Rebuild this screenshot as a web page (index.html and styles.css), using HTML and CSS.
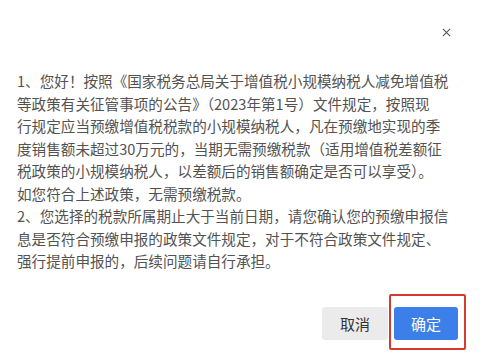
FILE: index.html
```html
<!DOCTYPE html>
<html lang="zh-CN">
<head>
<meta charset="utf-8">
<link rel="stylesheet" href="styles.css">
</head>
<body>
<div class="dialog">
  <div class="header">
    <span class="close" aria-label="关闭">
      <svg viewBox="0 0 10 10" width="9" height="9"><path d="M1 1L9 9M9 1L1 9" stroke="#555" stroke-width="1.2" fill="none"/></svg>
    </span>
  </div>
  <p class="message">1、您好！按照《国家税务总局关于增值税小规模纳税人减免增值税<br>等政策有关征管事项的公告》（2023年第1号）文件规定，按照现<br>行规定应当预缴增值税税款的小规模纳税人，凡在预缴地实现的季<br>度销售额未超过30万元的，当期无需预缴税款（适用增值税差额征<br>税政策的小规模纳税人，以差额后的销售额确定是否可以享受）。<br>如您符合上述政策，无需预缴税款。<br>2、您选择的税款所属期止大于当前日期，请您确认您的预缴申报信<br>息是否符合预缴申报的政策文件规定，对于不符合政策文件规定、<br>强行提前申报的，后续问题请自行承担。</p>
  <div class="footer">
    <button class="btn btn-cancel">取消</button>
    <button class="btn btn-ok">确定<span class="highlight"></span></button>
  </div>
</div>
</body>
</html>
```
FILE: styles.css
```css
html, body {
  margin: 0;
  padding: 0;
  background: #ffffff;
}
body {
  font-family: "Noto Sans CJK SC", "Microsoft YaHei", sans-serif;
  width: 487px;
  height: 358px;
  overflow: hidden;
}
.dialog {
  padding: 0 29px 0 17px;
}
.header {
  height: 70px;
  display: flex;
  justify-content: flex-end;
  align-items: flex-start;
}
.close {
  display: flex;
  align-items: center;
  justify-content: center;
  width: 12px;
  height: 12px;
  margin-top: 26px;
  margin-right: 6px;
}
.message {
  margin: 0;
  font-size: 14.6px;
  line-height: 22.5px;
  color: #525252;
  white-space: nowrap;
}
.footer {
  margin-top: 34px;
  display: flex;
  justify-content: flex-end;
  gap: 6px;
}
.btn {
  position: relative;
  height: 33px;
  border: none;
  border-radius: 3px;
  font-family: "Noto Sans CJK SC", "Microsoft YaHei", sans-serif;
  font-size: 15px;
  padding: 0;
  cursor: pointer;
}
.btn-cancel {
  width: 66px;
  background: #ebebeb;
  color: #333333;
}
.btn-ok {
  width: 64px;
  background: #3d7fe8;
  color: #ffffff;
}
.highlight {
  position: absolute;
  left: -5px;
  top: -13px;
  right: -8px;
  bottom: -10px;
  border: 2px solid #d8392f;
  border-radius: 2px;
  pointer-events: none;
}
```
